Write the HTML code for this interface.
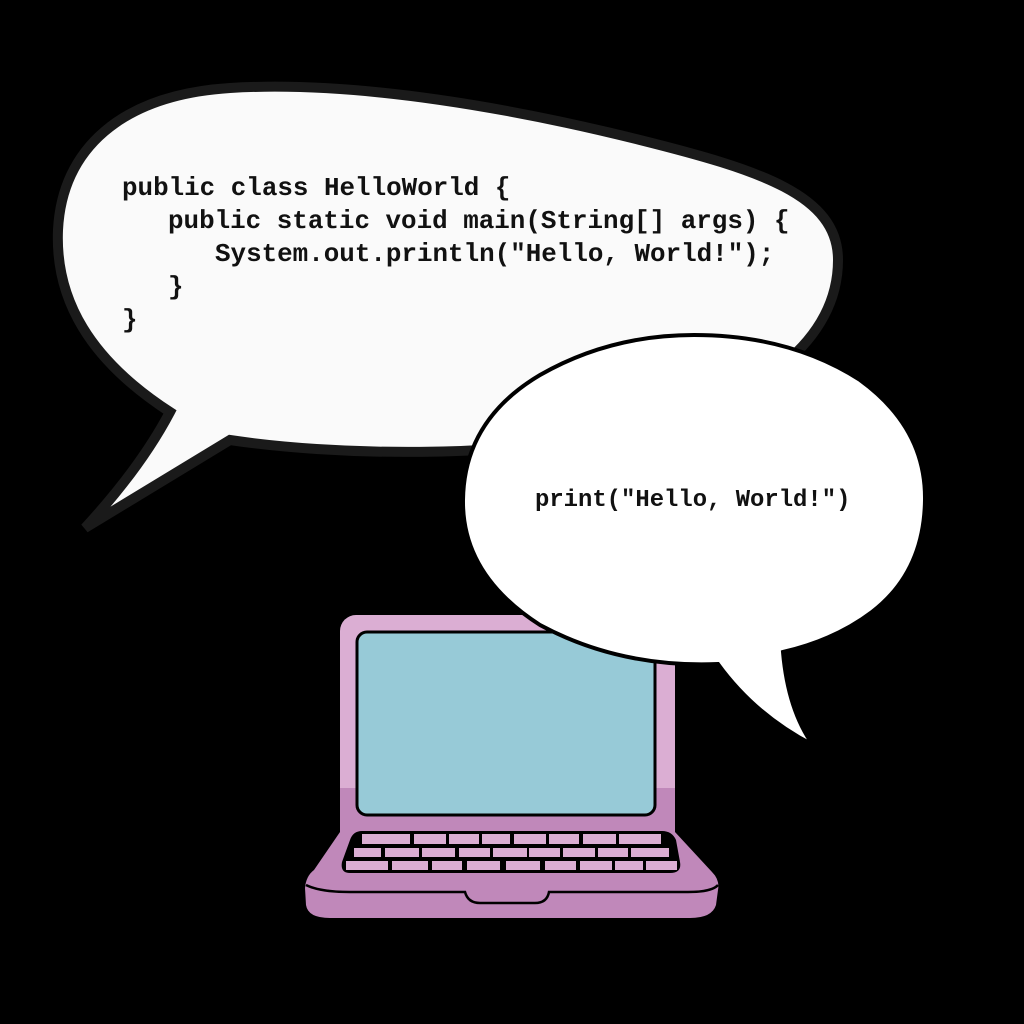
<!DOCTYPE html>
<html><head><style>
html,body{margin:0;padding:0;background:#000;width:1024px;height:1024px;overflow:hidden}
svg{display:block}
text{font-family:"Liberation Mono",monospace;font-weight:bold;fill:#111}
</style></head><body>
<svg width="1024" height="1024" viewBox="0 0 1024 1024">
<rect width="1024" height="1024" fill="#000"/>
<path d="M170,412 C90,360 55,300 58,230 C62,150 120,95 230,88 C360,80 520,110 640,140 C760,170 838,195 838,260 C838,340 760,400 640,430 C500,460 330,455 230,440 L85,528 C120,490 150,450 170,412 Z" fill="#fafafa" stroke="#1a1a1a" stroke-width="10" stroke-linejoin="miter"/>
<text font-size="25.9" x="122" y="195">public class HelloWorld {</text>
<text font-size="25.9" x="168" y="228">public static void main(String[] args) {</text>
<text font-size="25.9" x="215" y="261">System.out.println("Hello, World!");</text>
<text font-size="25.9" x="168" y="294">}</text>
<text font-size="25.9" x="122" y="327">}</text>
<rect x="340" y="615" width="335" height="218" rx="16" fill="#dbaed3"/>
<path d="M340,788 H675 V833 H340 Z" fill="#c088ba"/>
<rect x="357" y="632" width="298" height="183" rx="10" fill="#97cad7" stroke="#000" stroke-width="3"/>
<path d="M340,832 H675 L712,872 Q720,880 718,890 L716,905 Q712,918 690,918 H330 Q308,918 306,905 L305,888 Q306,876 314,870 Z" fill="#c088ba"/>
<path d="M306,885 Q320,892 350,892 H465 Q468,903 480,903 H535 Q547,903 549,892 H688 Q712,892 718,885" fill="none" stroke="#000" stroke-width="2.5"/>
<path d="M362,831 H662 Q672,831 676,840 L680,862 Q682,873 670,873 H350 Q340,873 342,862 L350,840 Q353,831 362,831 Z" fill="#000"/>
<g fill="#dbaed3">
<rect x="362" y="834" width="48" height="10"/><rect x="414" y="834" width="32" height="10"/><rect x="449" y="834" width="30" height="10"/><rect x="482" y="834" width="28" height="10"/><rect x="514" y="834" width="32" height="10"/><rect x="549" y="834" width="30" height="10"/><rect x="583" y="834" width="33" height="10"/><rect x="619" y="834" width="42" height="10"/>
<rect x="354" y="848" width="27" height="9"/><rect x="385" y="848" width="34" height="9"/><rect x="422" y="848" width="33" height="9"/><rect x="459" y="848" width="31" height="9"/><rect x="493" y="848" width="34" height="9"/><rect x="529" y="848" width="31" height="9"/><rect x="563" y="848" width="32" height="9"/><rect x="598" y="848" width="30" height="9"/><rect x="631" y="848" width="38" height="9"/>
<rect x="346" y="861" width="42" height="9"/><rect x="392" y="861" width="36" height="9"/><rect x="432" y="861" width="30" height="9"/><rect x="467" y="861" width="33" height="9"/><rect x="506" y="861" width="34" height="9"/><rect x="545" y="861" width="31" height="9"/><rect x="580" y="861" width="32" height="9"/><rect x="615" y="861" width="28" height="9"/><rect x="646" y="861" width="31" height="9"/>
</g>
<path d="M783,652 Q788,710 813,745 Q755,715 718,664 Q620,668 540,625 Q462,575 463,500 Q464,420 540,375 Q610,335 694,335 Q790,335 860,380 Q926,428 925,500 Q924,572 872,612 Q835,640 783,652 Z" fill="#fff" stroke="#000" stroke-width="4"/>
<text font-size="23.9" x="535" y="506">print("Hello, World!")</text>
</svg>
</body></html>
